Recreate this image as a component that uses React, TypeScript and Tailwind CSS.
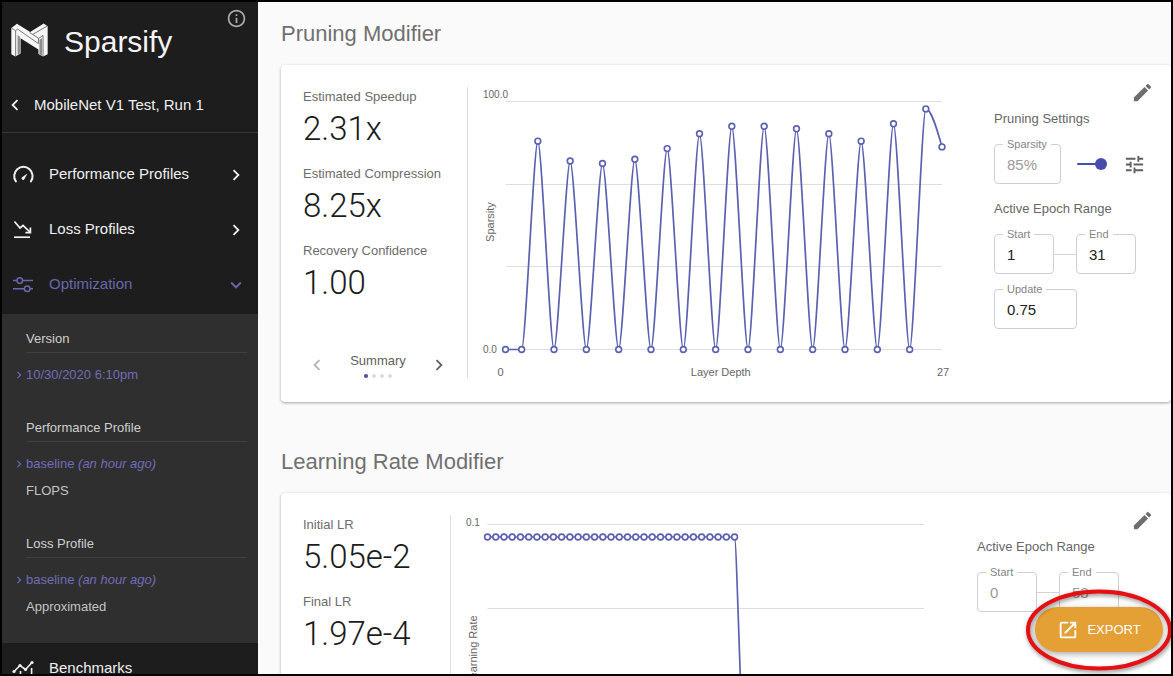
import { useId } from "react";
import type { ReactNode } from "react";
import {
  MdChevronLeft,
  MdChevronRight,
  MdEdit,
  MdExpandMore,
  MdInfoOutline,
  MdOpenInNew,
  MdTune,
} from "react-icons/md";

const PURPLE = "#5c60b0";

/* ---------- Icons ---------- */

function Logo() {
  return (
    <svg viewBox="0 0 112 102" className="mb-1 h-[34px] w-[37px] shrink-0" aria-hidden="true">
      <path
        fill="#f6f6f6"
        d="M1 15 L18 2 L58 27 L99 1 L111 9 V94 L97 101 L83 93 V80 L29 46 V92 L13 101 L1 94 Z"
      />
      <g fill="none" stroke="#4a4a4a" strokeWidth="2.2">
        <path d="M2 15 L14 23 V101" />
        <path d="M14 23 L20 18 L83 62 V46" />
        <path d="M56 28 L84 46 L97 37 V101" />
        <path d="M66 34 L109 9" />
      </g>
      <path fill="#8c8c8c" d="M20 36 L27 41 V92 L20 96 Z M86 50 L94 45 V98 L86 94 Z" />
    </svg>
  );
}

function GaugeIcon() {
  return (
    <svg viewBox="0 0 22 22" className="size-[22px]" fill="none" stroke="currentColor" strokeWidth="2" aria-hidden="true">
      <path d="M3.9 17.4 A9.2 9.2 0 1 1 18.9 17.4" strokeLinecap="round" />
      <path d="M15.4 9.6 L12.5 14.9 A1.5 1.5 0 1 1 10.4 13 Z" fill="currentColor" stroke="none" />
    </svg>
  );
}

function LossIcon() {
  return (
    <svg viewBox="0 0 22 22" className="size-[22px]" fill="none" stroke="currentColor" strokeWidth="1.7" aria-hidden="true">
      <path d="M2.5 2.5 L8 9 L11 6.5 L18 13.2" />
      <path d="M18.4 8.6 V13.6 H13.4" />
      <path d="M2 18.2 H18" />
    </svg>
  );
}

function SlidersIcon() {
  return (
    <svg viewBox="0 0 22 22" className="size-[22px]" fill="none" stroke="currentColor" strokeWidth="1.5" aria-hidden="true">
      <path d="M1 6.6 H5 M10.6 6.6 H21 M1 14.8 H12.4 M18 14.8 H21" />
      <circle cx="7.8" cy="6.6" r="2.8" />
      <circle cx="15.2" cy="14.8" r="2.8" />
    </svg>
  );
}

function BenchmarkIcon() {
  return (
    <svg viewBox="0 0 22 22" className="size-[22px]" fill="none" stroke="currentColor" strokeWidth="1.6" aria-hidden="true">
      <path d="M2 13.5 L8 7.5 L13.5 11.5 L20 4.5" />
      <path d="M3 17 V21 M8.5 13 V21 M14 16 V21 M19.6 10 V21" />
      <g fill="currentColor" stroke="none">
        <circle cx="2" cy="13.5" r="1.6" />
        <circle cx="8" cy="7.5" r="1.6" />
        <circle cx="13.5" cy="11.5" r="1.6" />
        <circle cx="20" cy="4.5" r="1.6" />
      </g>
    </svg>
  );
}

/* ---------- Sidebar ---------- */

function NavRow({ icon, label, trailing, active = false }: {
  icon: ReactNode;
  label: string;
  trailing?: ReactNode;
  active?: boolean;
}) {
  return (
    <button
      type="button"
      className={`flex h-[51px] w-full shrink-0 items-center pr-[11px] pl-2.5 text-left text-[15px] ${active ? "text-[#6a67ad]" : "text-[#f0f0f0]"}`}
    >
      {icon}
      <span className="ml-[15px] flex-1">{label}</span>
      {trailing}
    </button>
  );
}

function SubSection({ title, version, note, detail }: {
  title: string;
  version: string;
  note?: string;
  detail?: string;
}) {
  return (
    <section className="flex flex-col text-[13px] leading-4">
      <h3 className="border-b border-[#3f3f3f] pb-[5px] text-[#cfcfcf]">{title}</h3>
      <a href="#version" className="mt-3.5 -ml-3.5 flex items-center text-[#6f6cb8]">
        <MdChevronRight className="size-3.5" aria-hidden="true" />
        <span>
          {version}
          {note && <em> {note}</em>}
        </span>
      </a>
      {detail && <p className="mt-[11px] text-[#c4c4c4]">{detail}</p>}
    </section>
  );
}

function Sidebar() {
  return (
    <aside className="flex w-64 shrink-0 flex-col overflow-hidden bg-[#1d1d1d]">
      <div className="flex h-[131px] shrink-0 flex-col border-b border-[#353535]">
        <div className="flex items-start pl-[9px]">
          <div className="flex flex-1 items-center pt-5">
            <Logo />
            <h1 className="ml-4 text-[30px] leading-10 text-[#f4f4f4]">Sparsify</h1>
          </div>
          <button type="button" aria-label="About" className="mt-1.5 mr-[11px] text-[#a8a8a8]">
            <MdInfoOutline className="size-[21px]" />
          </button>
        </div>
        <a href="#projects" className="mt-8 flex items-center pl-0.5 text-[15px] leading-[22px] text-[#f0f0f0]">
          <MdChevronLeft className="size-[22px]" aria-hidden="true" />
          <span className="ml-2">MobileNet V1 Test, Run 1</span>
        </a>
      </div>
      <nav className="flex flex-col">
        <div className="flex flex-col gap-1 py-4 pb-1">
          <NavRow icon={<GaugeIcon />} label="Performance Profiles" trailing={<MdChevronRight className="size-[22px]" />} />
          <NavRow icon={<LossIcon />} label="Loss Profiles" trailing={<MdChevronRight className="size-[22px]" />} />
          <NavRow active icon={<SlidersIcon />} label="Optimization" trailing={<MdExpandMore className="size-[22px]" />} />
        </div>
        <div className="flex flex-col gap-[37px] bg-[#2f2f2f] pt-[17px] pr-[11px] pb-7 pl-6">
          <SubSection title="Version" version="10/30/2020 6:10pm" />
          <SubSection title="Performance Profile" version="baseline" note="(an hour ago)" detail="FLOPS" />
          <SubSection title="Loss Profile" version="baseline" note="(an hour ago)" detail="Approximated" />
        </div>
        <NavRow icon={<BenchmarkIcon />} label="Benchmarks" />
      </nav>
    </aside>
  );
}

/* ---------- Form parts ---------- */

function Field({ label, value, width, disabled = false }: {
  label: string;
  value: string;
  width: string;
  disabled?: boolean;
}) {
  const id = useId();
  return (
    <fieldset className={`${width} rounded border border-[#cfcfcf] px-2 pb-[5px]`}>
      <legend className="h-3 px-1 text-[11px] leading-3 text-[#858585]">
        <label htmlFor={id}>{label}</label>
      </legend>
      <input
        id={id}
        defaultValue={value}
        disabled={disabled}
        className="block h-7 w-full bg-transparent px-1 text-[15px] text-[#222222] disabled:text-[#9a9a9a]"
      />
    </fieldset>
  );
}

function EpochRange({ start, end, disabled = false }: { start: string; end: string; disabled?: boolean }) {
  return (
    <div className="mt-[11px] flex items-center">
      <Field label="Start" value={start} width="w-[60px]" disabled={disabled} />
      <span className="mt-1.5 h-px w-[22px] bg-[#d5d5d5]" />
      <Field label="End" value={end} width="w-[60px]" disabled={disabled} />
    </div>
  );
}

/* ---------- Charts ---------- */

type Point = { x: number; y: number };

type ChartProps = {
  label: string;
  left: number;
  right: number;
  gridLines: number[];
  points: Point[];
  endSlope?: number;
  topTick: string;
  bottomTick: string;
  lastX: string;
  xTitle: string;
};

function linePath(points: Point[], endSlope: number) {
  return points
    .map((p, i) => {
      if (i === 0) return `M${p.x} ${p.y}`;
      const prev = points[i - 1];
      const isLast = i === points.length - 1;
      const handle = (p.x - prev.x) * (isLast ? 0.33 : 0.24);
      const endY = isLast ? p.y - ((p.y - prev.y) / 3) * endSlope : p.y;
      return `C${prev.x + handle} ${prev.y} ${p.x - handle} ${endY} ${p.x} ${p.y}`;
    })
    .join(" ");
}

function Chart({ label, left, right, gridLines, points, endSlope = 0, topTick, bottomTick, lastX, xTitle }: ChartProps) {
  const bottom = gridLines[gridLines.length - 1];
  return (
    <svg viewBox="0 0 526 291" className="w-full overflow-visible" role="img" aria-label={`${label} chart`}>
      <g stroke="#dedede" strokeWidth="1">
        {gridLines.map((y) => (
          <line key={y} x1={left} x2={right} y1={y} y2={y} />
        ))}
      </g>
      <path d={linePath(points, endSlope)} fill="none" stroke={PURPLE} strokeWidth="1.7" />
      <g fill="#ffffff" stroke={PURPLE} strokeWidth="1.6">
        {points.map((p) => (
          <circle key={p.x} cx={p.x} cy={p.y} r="2.9" />
        ))}
      </g>
      <g fill="#666666" fontSize="10">
        <text x="15" y="11">{topTick}</text>
        <text x="15" y={bottom + 3}>{bottomTick}</text>
        <text x={left - 5} y={bottom + 26} fontSize="11" textAnchor="middle">0</text>
        <text x={(left + right) / 2 - 3} y={bottom + 26} fontSize="11" textAnchor="middle">{xTitle}</text>
        <text x={right + 1} y={bottom + 26} fontSize="11" textAnchor="middle">{lastX}</text>
        <text transform="translate(26 135) rotate(-90)" fontSize="11" textAnchor="middle">{label}</text>
      </g>
    </svg>
  );
}

const PEAKS = [84, 76, 75, 76.7, 81, 87, 90, 90, 89, 87, 84, 91, 97];
const SPARSITY = [0, ...PEAKS.flatMap((peak) => [0, peak]), 81.7];
const SPARSITY_POINTS = SPARSITY.map((v, i) => ({ x: 37.5 + i * (436.5 / 27), y: 262.5 - v * 2.48 }));

const RATE_POINTS = Array.from({ length: 54 }, (_, i) => ({
  x: 36.5 + i * (436.5 / 53),
  y: i <= 30 ? 22 : 207,
}));

/* ---------- Cards ---------- */

function Metric({ label, value }: { label: string; value: string }) {
  return (
    <div>
      <dt className="text-[13px] leading-4 text-[#6c6c6c]">{label}</dt>
      <dd className="mt-1 font-['Roboto','Liberation_Sans',sans-serif] text-[33px] leading-10 font-light text-[#1c1c1c]">{value}</dd>
    </div>
  );
}

function ModifierCard({ title, metrics, metricsWidth, footer, chart, settings, settingsWidth }: {
  title: string;
  metrics: { label: string; value: string }[];
  metricsWidth: string;
  footer?: ReactNode;
  chart: ReactNode;
  settings: ReactNode;
  settingsWidth: string;
}) {
  return (
    <section>
      <h2 className="text-[22px] leading-7 text-[#707070]">{title}</h2>
      <div className="mt-[17px] flex rounded bg-white pt-[22px] pb-6 pl-[22px] shadow-[0_1px_3px_rgba(0,0,0,0.35)]">
        <div className={`${metricsWidth} flex shrink-0 flex-col justify-between border-r border-[#dedede]`}>
          <dl className="flex flex-col gap-[17px] pt-0.5">
            {metrics.map((m) => (
              <Metric key={m.label} label={m.label} value={m.value} />
            ))}
          </dl>
          {footer}
        </div>
        <div className="min-w-0 flex-1">{chart}</div>
        <div className={`${settingsWidth} -mt-1.5 flex shrink-0 flex-col`}>
          <div className="flex justify-end pr-[17px]">
            <button type="button" aria-label={`Edit ${title}`} className="text-[#6e6e6e]">
              <MdEdit className="size-[23px]" />
            </button>
          </div>
          {settings}
        </div>
      </div>
    </section>
  );
}

function SummaryPager() {
  return (
    <div className="flex items-end pr-[17px] pl-[3px]">
      <button type="button" aria-label="Previous" className="mb-0.5 text-[#b5b5b5]">
        <MdChevronLeft className="size-[22px]" />
      </button>
      <div className="flex flex-1 flex-col items-center gap-[5px]">
        <span className="text-[13px] leading-4 text-[#606060]">Summary</span>
        <div className="flex gap-1">
          <span className="size-1 rounded-full bg-[#4a4d9c]" />
          <span className="size-1 rounded-full bg-[#dcdcdc]" />
          <span className="size-1 rounded-full bg-[#dcdcdc]" />
          <span className="size-1 rounded-full bg-[#dcdcdc]" />
        </div>
      </div>
      <button type="button" aria-label="Next" className="mb-0.5 text-[#606060]">
        <MdChevronRight className="size-[22px]" />
      </button>
    </div>
  );
}

function SettingsTitle({ children }: { children: ReactNode }) {
  return <h3 className="text-[13px] leading-4 text-[#666666]">{children}</h3>;
}

export default function App() {
  return (
    <div className="relative flex h-screen overflow-hidden border-2 border-black bg-[#fafafa] font-['Liberation_Sans',Arial,sans-serif]">
      <Sidebar />
      <main className="flex min-w-0 flex-1 flex-col gap-[46px] overflow-hidden pt-[18px] pl-[23px]">
        <ModifierCard
          title="Pruning Modifier"
          metricsWidth="w-[165px]"
          metrics={[
            { label: "Estimated Speedup", value: "2.31x" },
            { label: "Estimated Compression", value: "8.25x" },
            { label: "Recovery Confidence", value: "1.00" },
          ]}
          footer={<SummaryPager />}
          chart={
            <Chart
              label="Sparsity"
              left={37.5}
              right={474}
              gridLines={[14.5, 97.5, 179.5, 262.5]}
              points={SPARSITY_POINTS}
              endSlope={1.5}
              topTick="100.0"
              bottomTick="0.0"
              lastX="27"
              xTitle="Layer Depth"
            />
          }
          settingsWidth="w-[177px]"
          settings={
            <>
              <div className="mt-[7px]">
                <SettingsTitle>Pruning Settings</SettingsTitle>
              </div>
              <div className="mt-[11px] flex items-center">
                <Field label="Sparsity" value="85%" width="w-[67px]" disabled />
                <input
                  type="range"
                  aria-label="Sparsity level"
                  defaultValue={100}
                  className="mt-1.5 ml-4 h-3 w-[30px] appearance-none bg-transparent [&::-webkit-slider-runnable-track]:h-0.5 [&::-webkit-slider-runnable-track]:rounded-full [&::-webkit-slider-runnable-track]:bg-[#474cad] [&::-webkit-slider-thumb]:-mt-[5px] [&::-webkit-slider-thumb]:size-3 [&::-webkit-slider-thumb]:appearance-none [&::-webkit-slider-thumb]:rounded-full [&::-webkit-slider-thumb]:bg-[#474cad]"
                />
                <button type="button" aria-label="Advanced settings" className="mt-1.5 ml-4 text-[#606060]">
                  <MdTune className="size-[23px]" />
                </button>
              </div>
              <div className="mt-[17px]">
                <SettingsTitle>Active Epoch Range</SettingsTitle>
              </div>
              <EpochRange start="1" end="31" />
              <div className="mt-[9px] flex">
                <Field label="Update" value="0.75" width="w-[83px]" />
              </div>
            </>
          }
        />
        <ModifierCard
          title="Learning Rate Modifier"
          metricsWidth="w-[148px]"
          metrics={[
            { label: "Initial LR", value: "5.05e-2" },
            { label: "Final LR", value: "1.97e-4" },
          ]}
          chart={
            <Chart
              label="Learning Rate"
              left={36.5}
              right={473}
              gridLines={[9.5, 93.5, 177.5, 261.5]}
              points={RATE_POINTS}
              topTick="0.1"
              bottomTick="0.0"
              lastX="53"
              xTitle="Epoch"
            />
          }
          settingsWidth="w-[194px]"
          settings={
            <>
              <div className="mt-[7px]">
                <SettingsTitle>Active Epoch Range</SettingsTitle>
              </div>
              <EpochRange start="0" end="53" disabled />
            </>
          }
        />
      </main>
      <button
        type="button"
        className="absolute right-2 bottom-[22px] flex h-[45px] w-32 items-center justify-center gap-2 rounded-full bg-[#e5a035] text-[13px] text-white shadow-[0_2px_6px_rgba(0,0,0,0.35)]"
      >
        <MdOpenInNew className="size-[22px]" aria-hidden="true" />
        EXPORT
      </button>
      <svg
        viewBox="0 0 148 86"
        className="pointer-events-none absolute -right-0.5 bottom-0 h-[86px] w-[148px] drop-shadow-[1px_2px_2px_rgba(0,0,0,0.45)]"
        aria-hidden="true"
      >
        <ellipse cx="74" cy="42" rx="71" ry="38.5" fill="none" stroke="#e60f12" strokeWidth="4" />
      </svg>
    </div>
  );
}
